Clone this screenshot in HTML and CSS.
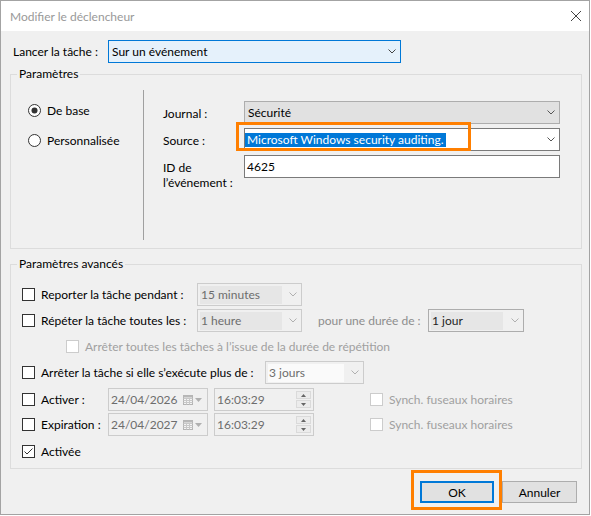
FILE: index.html
```html
<!DOCTYPE html>
<html lang="fr">
<head>
<meta charset="utf-8">
<title>Modifier le déclencheur</title>
<link rel="stylesheet" href="styles.css">
</head>
<body>
<div class="window">
  <div class="titlebar">
    <span class="title">Modifier le déclencheur</span>
    <svg class="close" width="10" height="10" viewBox="0 0 10 10"><path d="M0 0L10 10M10 0L0 10" stroke="#444" stroke-width="1" fill="none"/></svg>
  </div>
  <div class="content">
    <div class="launch">
      <span class="launch-lbl">Lancer la tâche :</span>
      <div class="combo combo-focus"><span>Sur un événement</span><svg class="chev" width="8" height="5" viewBox="0 0 8 5"><path d="M0.5 0.5L4 4L7.5 0.5" fill="none" stroke="#444"/></svg></div>
    </div>

    <section class="group g1">
      <h2 class="legend">Paramètres</h2>
      <div class="g1-body">
        <div class="radios">
          <label class="radio-row">
            <svg class="radio" width="13" height="13" viewBox="0 0 13 13"><circle cx="6.5" cy="6.5" r="6" fill="#fff" stroke="#333"/><circle cx="6.5" cy="6.5" r="3" fill="#333"/></svg>
            <span>De base</span>
          </label>
          <label class="radio-row">
            <svg class="radio" width="13" height="13" viewBox="0 0 13 13"><circle cx="6.5" cy="6.5" r="6" fill="#fff" stroke="#333"/></svg>
            <span>Personnalisée</span>
          </label>
        </div>
        <div class="sep"></div>
        <div class="fields">
          <span class="flbl">Journal :</span>
          <div class="combo combo-ro"><span>Sécurité</span><svg class="chev" width="8" height="5" viewBox="0 0 8 5"><path d="M0.5 0.5L4 4L7.5 0.5" fill="none" stroke="#555"/></svg></div>
          <span class="flbl">Source :</span>
          <div class="combo combo-edit">
            <span class="sel">Microsoft Windows security auditing.</span>
            <svg class="chev" width="8" height="5" viewBox="0 0 8 5"><path d="M0.5 0.5L4 4L7.5 0.5" fill="none" stroke="#555"/></svg>
            <div class="orange orange-src"></div>
          </div>
          <span class="flbl">ID de<br>l’événement :</span>
          <div class="textbox">4625</div>
        </div>
      </div>
    </section>

    <section class="group g2">
      <h2 class="legend">Paramètres avancés</h2>
      <div class="g2-body">
        <div class="arow r1">
          <span class="cb"></span>
          <span class="albl w156">Reporter la tâche pendant :</span>
          <div class="combo combo-dis w105"><span class="dtext">15 minutes</span><svg class="chev" width="8" height="5" viewBox="0 0 8 5"><path d="M0.5 0.5L4 4L7.5 0.5" fill="none" stroke="#b0b0b0"/></svg></div>
        </div>
        <div class="arow r2">
          <span class="cb"></span>
          <span class="albl w156">Répéter la tâche toutes les :</span>
          <div class="combo combo-dis w105"><span class="dtext">1 heure</span><svg class="chev" width="8" height="5" viewBox="0 0 8 5"><path d="M0.5 0.5L4 4L7.5 0.5" fill="none" stroke="#b0b0b0"/></svg></div>
          <span class="gray-lbl duree">pour une durée de :</span>
          <div class="combo combo-dis2 w96"><span class="dtext2">1 jour</span><svg class="chev" width="8" height="5" viewBox="0 0 8 5"><path d="M0.5 0.5L4 4L7.5 0.5" fill="none" stroke="#b0b0b0"/></svg></div>
        </div>
        <div class="arow r3">
          <span class="cb cb-dis indent"></span>
          <span class="gray-lbl">Arrêter toutes les tâches à l’issue de la durée de répétition</span>
        </div>
        <div class="arow r4">
          <span class="cb"></span>
          <span class="albl w224">Arrêter la tâche si elle s’exécute plus de :</span>
          <div class="combo combo-dis3 w99"><span class="dtext3">3 jours</span><svg class="chev" width="8" height="5" viewBox="0 0 8 5"><path d="M0.5 0.5L4 4L7.5 0.5" fill="none" stroke="#b0b0b0"/></svg></div>
        </div>
        <div class="arow r5">
          <span class="cb"></span>
          <span class="albl w67">Activer :</span>
          <div class="picker">
            <span class="ptext">24/04/2026</span>
            <span class="calwrap">
              <svg width="10" height="10" viewBox="0 0 10 10"><rect x="0.5" y="0.5" width="9" height="9" fill="#f4f4f4" stroke="#b4b4b4"/><path d="M0.5 3.5H9.5M0.5 5.5H9.5M0.5 7.5H9.5M3.5 3.5V9.5M6.5 3.5V9.5" stroke="#c8c8c8"/><rect x="0.5" y="0.5" width="9" height="2" fill="#b8b8b8"/></svg>
              <svg width="7" height="4" viewBox="0 0 7 4"><path d="M0 0H7L3.5 4Z" fill="#b0b0b0"/></svg>
            </span>
          </div>
          <div class="picker time">
            <span class="ptext">16:03:29</span>
            <span class="spin">
              <span class="sb"><svg width="5" height="3" viewBox="0 0 5 3"><path d="M0 3H5L2.5 0Z" fill="#666"/></svg></span>
              <span class="sb"><svg width="5" height="3" viewBox="0 0 5 3"><path d="M0 0H5L2.5 3Z" fill="#666"/></svg></span>
            </span>
          </div>
          <span class="cb cb-dis sync"></span>
          <span class="gray-lbl">Synch. fuseaux horaires</span>
        </div>
        <div class="arow r6">
          <span class="cb"></span>
          <span class="albl w67">Expiration :</span>
          <div class="picker">
            <span class="ptext">24/04/2027</span>
            <span class="calwrap">
              <svg width="10" height="10" viewBox="0 0 10 10"><rect x="0.5" y="0.5" width="9" height="9" fill="#f4f4f4" stroke="#b4b4b4"/><path d="M0.5 3.5H9.5M0.5 5.5H9.5M0.5 7.5H9.5M3.5 3.5V9.5M6.5 3.5V9.5" stroke="#c8c8c8"/><rect x="0.5" y="0.5" width="9" height="2" fill="#b8b8b8"/></svg>
              <svg width="7" height="4" viewBox="0 0 7 4"><path d="M0 0H7L3.5 4Z" fill="#b0b0b0"/></svg>
            </span>
          </div>
          <div class="picker time">
            <span class="ptext">16:03:29</span>
            <span class="spin">
              <span class="sb"><svg width="5" height="3" viewBox="0 0 5 3"><path d="M0 3H5L2.5 0Z" fill="#666"/></svg></span>
              <span class="sb"><svg width="5" height="3" viewBox="0 0 5 3"><path d="M0 0H5L2.5 3Z" fill="#666"/></svg></span>
            </span>
          </div>
          <span class="cb cb-dis sync"></span>
          <span class="gray-lbl">Synch. fuseaux horaires</span>
        </div>
        <div class="arow r7">
          <svg class="cbsvg" width="13" height="13" viewBox="0 0 13 13"><rect x="0.5" y="0.5" width="12" height="12" fill="#fff" stroke="#333"/><path d="M2.5 6.5L5 9L10.5 3.5" fill="none" stroke="#333" stroke-width="1"/></svg>
          <span class="albl">Activée</span>
        </div>
      </div>
    </section>

    <div class="buttons">
      <div class="btnwrap">
        <div class="btn btn-ok">OK</div>
        <div class="orange orange-ok"></div>
      </div>
      <div class="btn">Annuler</div>
    </div>
  </div>
</div>
</body>
</html>
```
FILE: styles.css
```css
* { box-sizing: border-box; }
html, body { margin: 0; padding: 0; background: #fff; }
body {
  font-family: Lato, "Noto Sans", "DejaVu Sans", sans-serif;
  font-size: 12px;
  line-height: 15px;
  color: #000;
}
.window {
  width: 590px;
  height: 515px;
  border: 1px solid #a3a3a3;
  background: #f0f0f0;
  display: flex;
  flex-direction: column;
}
.titlebar {
  height: 30px;
  flex: none;
  background: #fff;
  display: flex;
  align-items: center;
  justify-content: space-between;
  padding: 0 8px 0 9px;
}
.title { color: #999; }
.close { display: block; }

.content {
  flex: 1;
  padding: 9px 7px 0 9px;
  display: flex;
  flex-direction: column;
}
.launch { display: flex; align-items: center; height: 23px; flex: none; }
.launch-lbl { width: 95px; margin-left: 3px; }

.combo {
  height: 23px;
  border: 1px solid #adadad;
  display: flex;
  align-items: center;
  justify-content: space-between;
  padding: 0 4px 0 3px;
  white-space: nowrap;
  flex: none;
}
.chev { display: block; flex: none; }
.combo-focus { width: 293px; border-color: #0078d7; background: #e5f1fb; }
.combo-ro { background: #e1e1e1; border-color: #adadad; }
.combo-edit { background: #fff; border-color: #7a7a7a; padding-left: 0; position: relative; }
.sel { background: #0078d7; color: #fff; line-height: 14px; padding: 0 2px; }
.textbox {
  height: 23px;
  border: 1px solid #7a7a7a;
  background: #fff;
  padding: 0 2px;
  display: flex;
  align-items: center;
}

.orange {
  position: absolute;
  border: 3px solid #ff7f00;
  pointer-events: none;
}
.orange-src { left: -9px; top: -7px; width: 235px; height: 29px; }

.group {
  border: 1px solid #dcdcdc;
  flex: none;
}
.legend {
  display: block;
  width: fit-content;
  margin: -9px 0 0 6px;
  padding: 0 2px;
  background: #f0f0f0;
  font-size: 12px;
  font-weight: normal;
  line-height: 16px;
  height: 16px;
}
.g1 { margin-top: 11px; }
.g1-body {
  display: flex;
  padding: 8px 0 8px 0;
}
.radios {
  width: 132px;
  padding: 12px 0 0 17px;
  display: flex;
  flex-direction: column;
  gap: 14px;
}
.radio-row { display: flex; align-items: center; height: 16px; gap: 6px; }
.radio { display: block; flex: none; }
.sep { width: 1px; height: 150px; background: #a0a0a0; flex: none; }
.fields {
  display: grid;
  grid-template-columns: 81px 316px;
  row-gap: 4px;
  padding: 11px 0 0 19px;
  align-content: start;
}
.flbl { padding-top: 5px; line-height: 15px; }

.g2 { margin-top: 15px; }
.g2-body { padding: 11px 0 5px 11px; display: flex; flex-direction: column; }
.arow { display: flex; align-items: center; height: 23px; white-space: nowrap; }
.r2, .r3, .r4 { margin-top: 3px; }
.r5 { margin-top: 4px; }
.r6 { margin-top: 2px; }
.r7 { margin-top: 4px; }
.cb {
  width: 13px; height: 13px;
  border: 1px solid #333;
  background: #fff;
  margin-right: 6px;
  flex: none;
}
.cbsvg { display: block; flex: none; margin-right: 6px; }
.cb-dis { border-color: #cccccc; background: #fff; }
.indent { margin-left: 44px; }
.sync { margin-left: 56px; }
.albl { flex: none; }
.w156 { width: 156px; }
.w224 { width: 224px; }
.w67 { width: 67px; }
.w105 { width: 105px; }
.w96 { width: 96px; }
.w99 { width: 99px; }
.gray-lbl { color: #a0a0a0; }
.duree { margin-left: 16px; width: 110px; color: #8d8d8d; }

.combo-dis { border-color: #cccccc; background: #f0f0f0; padding: 0 4px 0 2px; }
.dtext { color: #6d6d6d; background: #e6e6e6; width: 82px; line-height: 18px; padding-left: 1px; }
.combo-dis2 { border-color: #adadad; background: #f0f0f0; padding: 0 4px 0 2px; }
.dtext2 { color: #1e1e1e; background: #e6e6e6; width: 72px; line-height: 18px; padding-left: 1px; }
.combo-dis3 { border-color: #cccccc; background: #f0f0f0; padding: 0 4px 0 2px; }
.dtext3 { color: #6d6d6d; background: #fafafa; width: 76px; line-height: 18px; padding-left: 1px; }

.picker {
  width: 100px;
  height: 23px;
  border: 1px solid #cccccc;
  background: #f0f0f0;
  display: flex;
  align-items: center;
  justify-content: space-between;
  padding: 0 5px 0 2px;
  color: #6d6d6d;
  flex: none;
}
.picker.time { margin-left: 6px; padding-right: 2px; }
.calwrap { display: flex; align-items: center; gap: 2px; }
.calwrap svg { display: block; }
.spin { display: flex; flex-direction: column; gap: 1px; }
.sb {
  width: 15px; height: 8px;
  border: 1px solid #dadada;
  background: #ececec;
  display: flex; align-items: center; justify-content: center;
}
.sb svg { display: block; }

.buttons {
  display: flex;
  justify-content: flex-end;
  gap: 8px;
  margin-top: 12px;
  padding-right: 5px;
}
.btnwrap { position: relative; }
.btn {
  width: 75px;
  height: 22px;
  border: 1px solid #adadad;
  background: #e1e1e1;
  display: flex;
  align-items: center;
  justify-content: center;
}
.btn-ok { width: 74px; border: 2px solid #0078d7; }
.orange-ok { left: -9px; top: -11px; width: 91px; height: 40px; }
```
